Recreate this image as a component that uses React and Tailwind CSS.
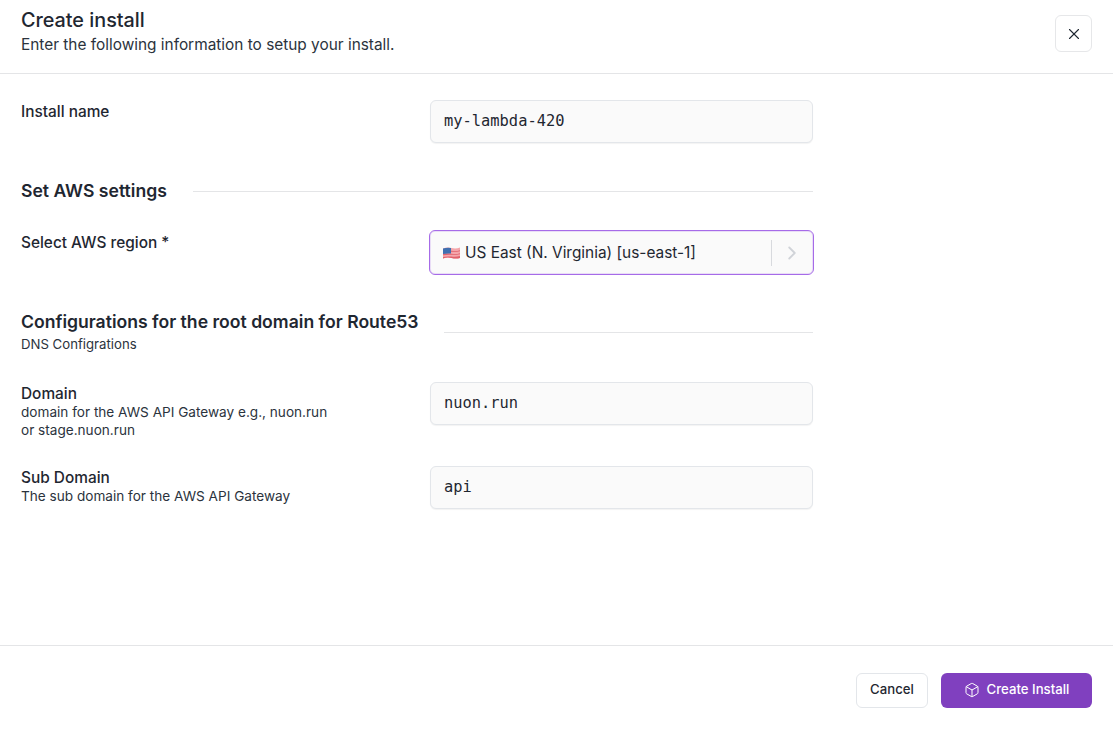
import { X, ChevronRight, Box } from 'lucide-react';

const sans = 'font-["Inter",sans-serif]';

function FlagUS() {
  return (
    <svg width="17" height="12" viewBox="0 0 17 12" className="shrink-0">
      <path d="M0 1.5Q4 0 8.5 1T17 .5V11Q13 12 8.5 11T0 11.5Z" fill="#f4a6ab" />
      <path d="M0 4.2Q4 3 8.5 3.8T17 3.2V4.2Q13 5 8.5 4.8T0 5.2ZM0 7.2Q4 6 8.5 6.8T17 6.2V7.2Q13 8 8.5 7.8T0 8.2ZM0 10Q4 9 8.5 9.6T17 9V11Q13 12 8.5 11T0 11.5Z" fill="#e0616c" />
      <path d="M0 1.5Q4 .4 8 1V6.6Q4 6.2 0 7Z" fill="#3f6fb0" />
    </svg>
  );
}

function TextField({ value }) {
  return (
    <div className='flex h-[43px] w-[383px] shrink-0 items-center rounded-md border border-[#e3e6ea] bg-[#fafafa] px-[13px] font-["DejaVu_Sans_Mono",monospace] text-[15.4px] text-[#1f2731] shadow-[0_1px_1px_rgba(0,0,0,0.05)]'>
      {value}
    </div>
  );
}

function Field({ label, help, children, className, labelClass = 'pt-[1px]' }) {
  return (
    <div className={`flex items-start justify-between ${className}`}>
      <div className={`w-[320px] ${labelClass}`}>
        <div className="text-[15.4px] leading-[21px] font-medium text-[#1f2731]">{label}</div>
        {help && <div className="text-[13.6px] leading-[17.5px] text-[#2b333d]">{help}</div>}
      </div>
      {children}
    </div>
  );
}

export default function App() {
  return (
    <div className={`flex h-[729px] flex-col bg-white ${sans}`}>
      {/* Header */}
      <div className="flex h-[74px] shrink-0 items-start justify-between border-b border-[#e4e5e7] px-[21px] pt-[8px]">
        <div>
          <h1 className="text-[19.8px] leading-[25px] font-medium text-[#1f2731]">Create install</h1>
          <p className="mt-[2px] text-[15.4px] leading-[20px] text-[#2b333d]">
            Enter the following information to setup your install.
          </p>
        </div>
        <button className="mt-[7px] flex h-[37px] w-[37px] items-center justify-center rounded-md border border-[#e6e7e9] bg-white text-[#1f2731]">
          <X size={18} strokeWidth={1.5} />
        </button>
      </div>

      {/* Form */}
      <div className="flex-1">
        <div className="w-[813px] pl-[21px]">
          <Field label="Install name" className="pt-[26px]">
            <TextField value="my-lambda-420" />
          </Field>

          <div className="mt-[37px] flex items-center gap-[26px]">
            <h2 className="text-[17.6px] leading-[22px] font-semibold text-[#1f2731]">Set AWS settings</h2>
            <div className="h-px flex-1 bg-[#e4e5e7]" />
          </div>

          <Field label="Select AWS region *" labelClass="pt-[2px]" className="mt-[28px]">
            <div className="-mx-px flex h-[45px] w-[385px] shrink-0 items-center rounded-md border border-[#a66be8] bg-[#fafafa] pr-[10px] pl-[13px] text-[15.4px] text-[#1f2731] shadow-[inset_0_0_0_1px_rgba(166,107,232,0.2)]">
              <FlagUS />
              <span className="ml-[5px] flex-1">US East (N. Virginia) [us-east-1]</span>
              <div className="h-[26px] w-px bg-[#d8dade]" />
              <ChevronRight size={22} strokeWidth={2} className="ml-[9px] text-[#d0d3d8]" />
            </div>
          </Field>

          <div className="mt-[36px] flex items-center gap-[25px]">
            <div>
              <h2 className="text-[17.6px] leading-[22px] font-semibold whitespace-nowrap text-[#1f2731]">
                Configurations for the root domain for Route53
              </h2>
              <p className="mt-[2px] text-[13.2px] leading-[18px] text-[#2b333d]">DNS Configrations</p>
            </div>
            <div className="h-px flex-1 bg-[#e4e5e7]" />
          </div>

          <Field
            label="Domain"
            help={<>domain for the AWS API Gateway e.g., nuon.run<br />or stage.nuon.run</>}
            className="mt-[29px]"
          >
            <TextField value="nuon.run" />
          </Field>

          <Field label="Sub Domain" help="The sub domain for the AWS API Gateway" className="mt-[27px]">
            <TextField value="api" />
          </Field>
        </div>
      </div>

      {/* Footer */}
      <div className="flex h-[84px] shrink-0 items-start justify-end gap-[13px] border-t border-[#e4e5e7] px-[21px] pt-[27px]">
        <button className="h-[35px] w-[72px] rounded-md border border-[#e3e6ea] bg-white pb-[2px] text-[13.2px] font-medium text-[#1f2731]">
          Cancel
        </button>
        <button className="flex h-[35px] w-[151px] items-center justify-center gap-[7px] rounded-md bg-[#8040bf] pb-[1px] text-[13.2px] font-medium text-white">
          <Box size={16} strokeWidth={1.5} />
          Create Install
        </button>
      </div>
    </div>
  );
}
